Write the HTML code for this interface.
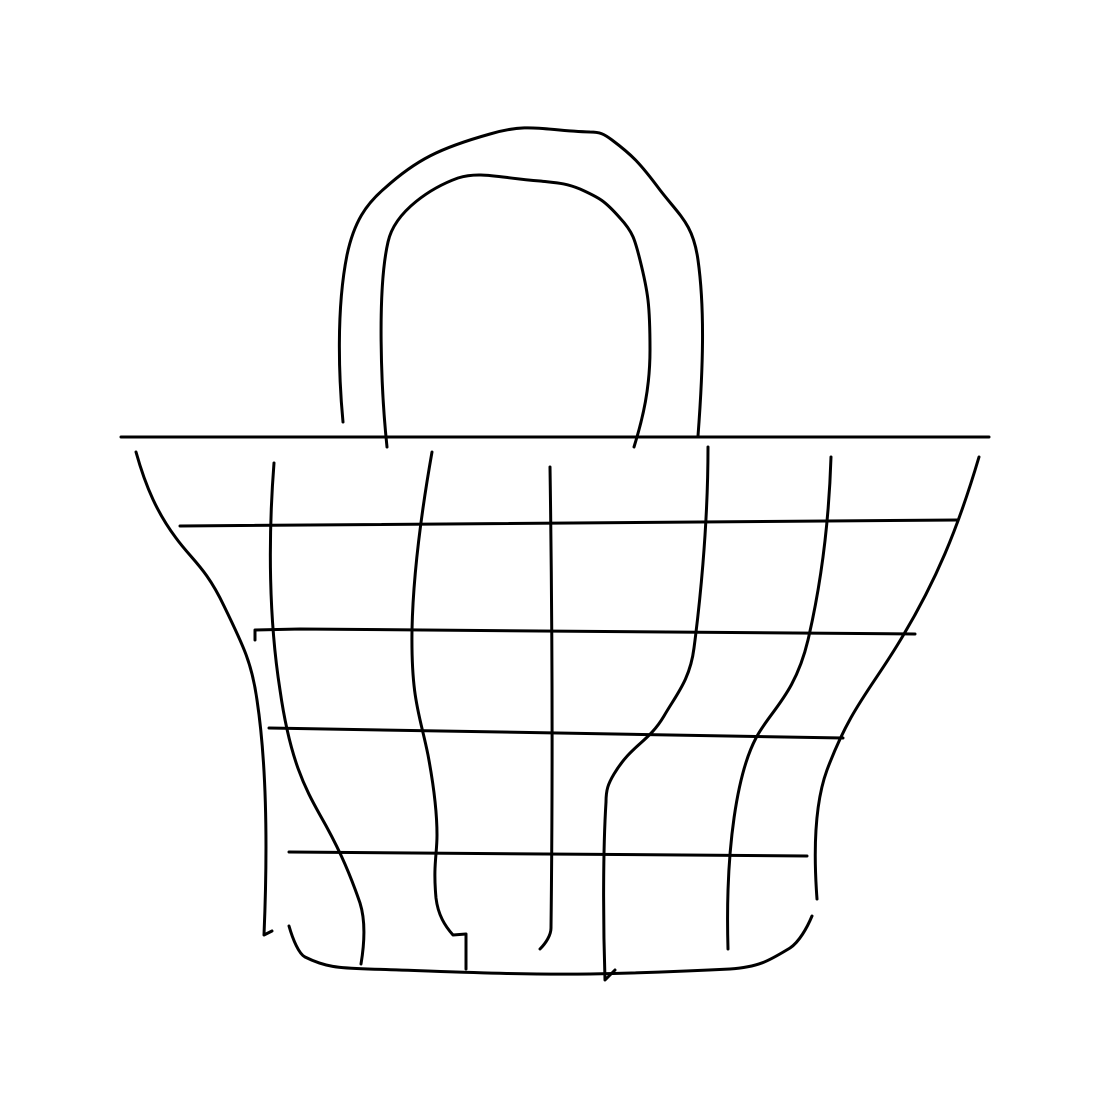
<!DOCTYPE html>
<html><head><style>html,body{margin:0;padding:0;background:#fff;width:1111px;height:1111px;overflow:hidden}</style></head>
<body>
<svg width="1111" height="1111" viewBox="0 0 1111 1111" xmlns="http://www.w3.org/2000/svg" fill="none" stroke="#000" stroke-width="3" stroke-linecap="round" stroke-linejoin="round">
<path d="M343 422 C339 380 336 310 347 255 C354 222 366 204 385 188 C416 160 440 148 490 134 C530 122 545 131 590 132 C600 132 604 134 612 140 C632 155 640 163 660 190 C680 216 693 224 698 260 C705 310 703 370 698 436"/>
<path d="M387 447 C381 390 377 290 388 242 C395 210 433 187 458 178 C480 171 500 178 540 181 C558 183 565 183 580 189 C600 198 605 201 620 218 C633 232 635 240 640 260 C648 292 650 305 650 350 C650 388 643 418 634 447"/>
<path d="M121 437 L989 437"/>
<path d="M136 452 C146 488 158 514 176 538 C192 560 206 568 224 606 C244 647 252 664 257 700 C266 760 268 840 264 935 L272 931"/>
<path d="M979 457 C958 528 936 582 898 644 C870 690 850 709 827 770 C816 800 813 845 817 899"/>
<path d="M274 463 C268 540 269 620 280 690 C290 760 305 788 320 815 C336 843 348 868 360 903 C366 922 364 946 361 964"/>
<path d="M432 452 C420 520 413 580 412 630 C411 700 420 715 428 755 C434 787 437 815 437 835 C437 855 433 865 436 898 C438 915 445 926 453 935 L466 934 L466 969"/>
<path d="M550 467 C552 600 553 760 551 928 C551 935 546 943 540 949"/>
<path d="M708 447 C708 530 699 610 694 648 C690 680 676 695 664 716 C648 743 632 744 614 774 C608 784 606 790 606 802 C603 850 603 920 605 980 L615 970"/>
<path d="M831 457 C829 520 822 580 808 640 C795 695 770 711 756 738 C738 772 725 845 728 949"/>
<path d="M289 926 C293 940 299 954 305 957 C325 967 338 968 368 969 C440 971 510 975 590 974 C640 973 690 971 730 969 C760 967 770 960 790 948 C799 942 807 928 812 916"/>
<path d="M180 526 L958 520"/>
<path d="M255 640 L255 630 L300 629 L915 634"/>
<path d="M269 728 L843 738"/>
<path d="M289 852 L807 856"/>
</svg>
</body></html>
